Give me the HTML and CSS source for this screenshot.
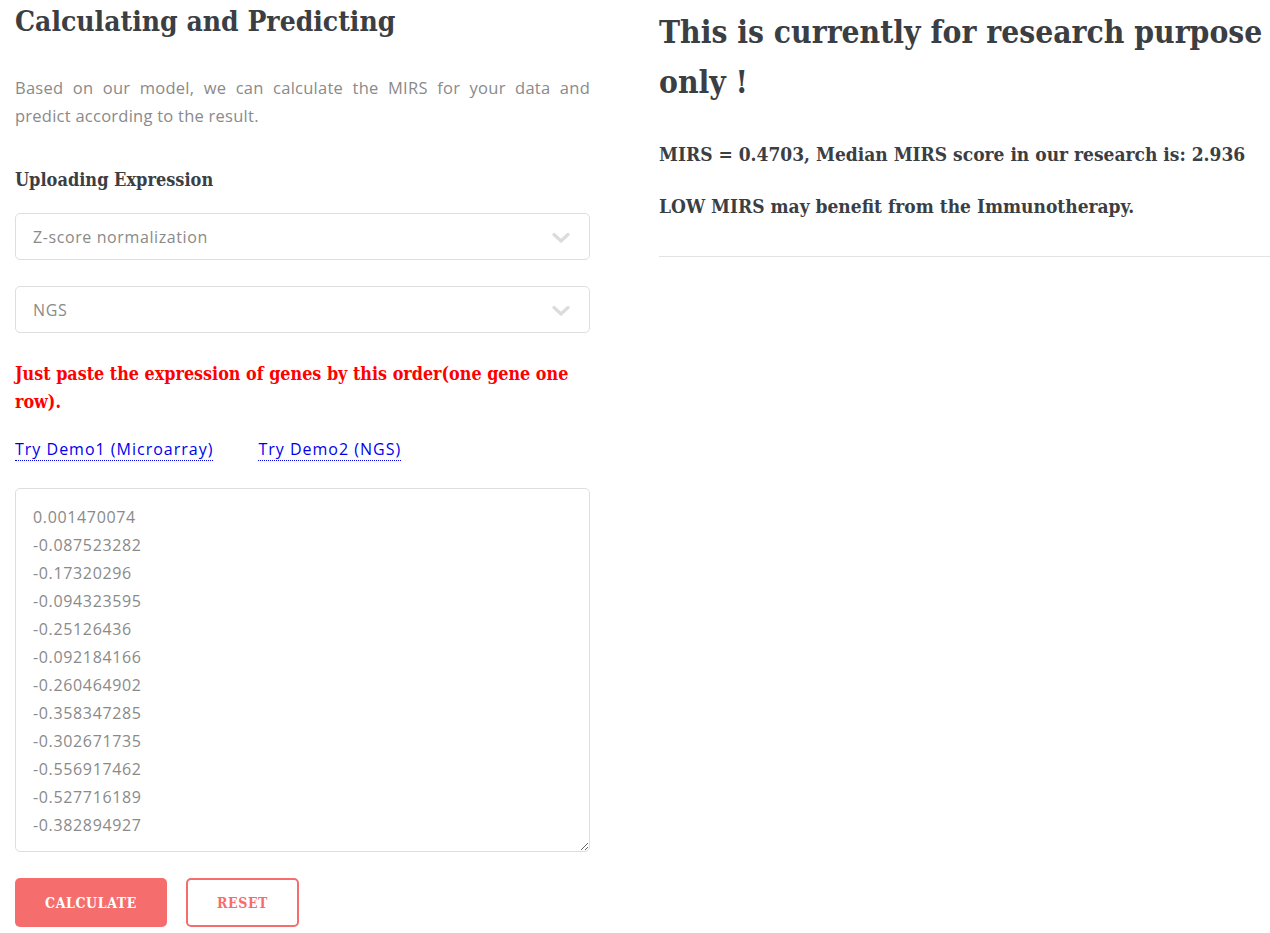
FILE: index.html
```html
<!DOCTYPE html>
<html lang="en">
<head>
<meta charset="utf-8">
<title>Calculating and Predicting</title>
<link rel="stylesheet" href="styles.css">
</head>
<body>
<div class="page">
  <section class="left">
    <h2 class="title">Calculating and Predicting</h2>
    <p class="intro">Based on our model, we can calculate the MIRS for your data and predict according to the result.</p>
    <h4 class="label">Uploading Expression</h4>
    <div class="select">
      <span class="select-text">Z-score normalization</span>
      <svg class="chev" width="18" height="12" viewBox="0 0 18 12"><path d="M2 2.5 L9 9 L16 2.5" fill="none" stroke="#dcdcdc" stroke-width="3.2" stroke-linecap="round" stroke-linejoin="round"/></svg>
    </div>
    <div class="select second">
      <span class="select-text">NGS</span>
      <svg class="chev" width="18" height="12" viewBox="0 0 18 12"><path d="M2 2.5 L9 9 L16 2.5" fill="none" stroke="#dcdcdc" stroke-width="3.2" stroke-linecap="round" stroke-linejoin="round"/></svg>
    </div>
    <p class="warn">Just paste the expression of genes by this order(one gene one row).</p>
    <div class="links">
      <a class="demo" href="#">Try Demo1 (Microarray)</a>
      <a class="demo" href="#">Try Demo2 (NGS)</a>
    </div>
    <textarea class="data">0.001470074
-0.087523282
-0.17320296
-0.094323595
-0.25126436
-0.092184166
-0.260464902
-0.358347285
-0.302671735
-0.556917462
-0.527716189
-0.382894927</textarea>
    <div class="buttons">
      <button class="btn btn-fill">CALCULATE</button>
      <button class="btn btn-line">RESET</button>
    </div>
  </section>
  <section class="right">
    <h1 class="notice">This is currently for research purpose only !</h1>
    <p class="result">MIRS = 0.4703, Median MIRS score in our research is: 2.936</p>
    <p class="result second">LOW MIRS may benefit from the Immunotherapy.</p>
    <hr class="rule">
  </section>
</div>
</body>
</html>
```
FILE: styles.css
```css
* { box-sizing: border-box; }
html, body { margin: 0; padding: 0; background: #fff; }
body {
  font-family: "Open Sans", "Noto Sans", sans-serif;
  color: #888;
  overflow: hidden;
}
.page {
  display: grid;
  grid-template-columns: 575px 611px;
  column-gap: 69px;
  padding-left: 15px;
  align-items: start;
}
.left { display: flex; flex-direction: column; }
.title, .label, .warn, .notice, .result, .btn {
  font-family: "DejaVu Serif Condensed", "DejaVu Serif", serif;
  font-stretch: condensed;
}
.title {
  margin: 4px 0 0;
  font-size: 28px;
  line-height: 36px;
  font-weight: 700;
  color: #3b3e43;
}
.intro {
  margin: 34px 0 0;
  font-size: 16.5px;
  line-height: 28px;
  text-align: justify;
  color: #8a8a8a;
  letter-spacing: 0.25px;
}
.label {
  margin: 38px 0 0;
  font-size: 18px;
  line-height: 24px;
  font-weight: 700;
  color: #3b3e43;
}
.select {
  margin-top: 21px;
  height: 47px;
  border: 1px solid #dedede;
  border-radius: 5px;
  display: flex;
  align-items: center;
  justify-content: space-between;
  padding: 0 19px 0 17px;
}
.select.second { margin-top: 26px; }
.select-text { font-size: 16px; color: #8a8a8a; letter-spacing: 0.6px; }
.chev { margin-top: 3px; }
.warn {
  margin: 27px 0 0;
  font-size: 17.8px;
  line-height: 28px;
  font-weight: 700;
  color: #f00;
}
.links {
  margin-top: 20px;
  display: flex;
  gap: 45px;
  height: 28px;
  align-items: center;
}
.demo {
  font-size: 16px;
  letter-spacing: 1px;
  color: #0000ee;
  text-decoration: none;
  border-bottom: 1px dotted #0000ee;
  line-height: 21px;
}
.data {
  margin-top: 24px;
  width: 575px;
  height: 364px;
  border: 1px solid #dedede;
  border-radius: 5px;
  padding: 14px 17px 12px;
  font-family: "Open Sans", "Noto Sans", sans-serif;
  font-size: 16px;
  letter-spacing: 0.65px;
  line-height: 28px;
  color: #8a8a8a;
  resize: vertical;
  overflow: hidden;
  outline: none;
}
.buttons {
  margin-top: 26px;
  display: flex;
  gap: 19px;
}
.btn {
  height: 49px;
  padding: 0 30px;
  border-radius: 5px;
  font-size: 14px;
  font-weight: 700;
  letter-spacing: 0.6px;
  cursor: pointer;
}
.btn-fill {
  background: #f56d6d;
  color: #fff;
  border: none;
}
.btn-line {
  padding: 0 29px;
  background: #fff;
  color: #f56d6d;
  border: 2px solid #f56d6d;
}
.right { display: flex; flex-direction: column; }
.notice {
  margin: 7px 0 0;
  font-size: 31.5px;
  line-height: 50px;
  font-weight: 700;
  color: #3b3e43;
}
.result {
  margin: 33px 0 0;
  font-size: 19px;
  line-height: 28px;
  font-weight: 700;
  color: #3b3e43;
}
.result.second { margin-top: 24px; }
.rule {
  margin: 36px 0 0;
  width: 620px;
  border: none;
  border-top: 1px solid #e3e3e3;
}
```
